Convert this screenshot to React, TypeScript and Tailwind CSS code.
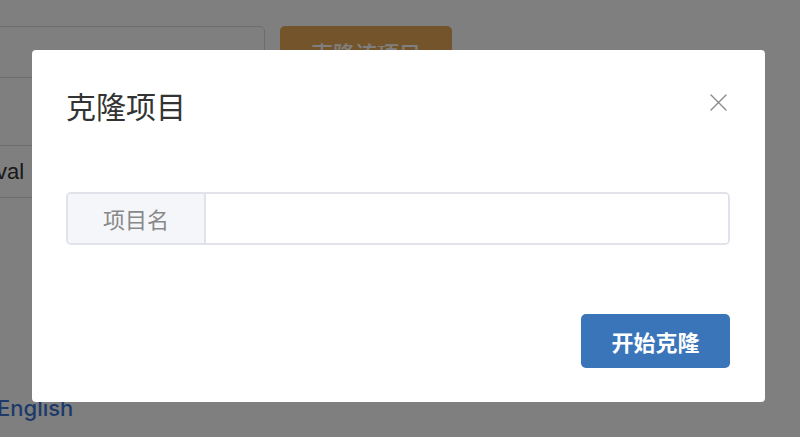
import React from "react";

export default function App() {
  const cjk = { fontFamily: '"Noto Sans CJK SC", "Noto Sans", sans-serif' };
  return (
    <div className="relative h-[437px] w-[800px] overflow-hidden bg-white" style={{ fontFamily: '"Liberation Sans", "Noto Sans CJK SC", sans-serif' }}>
      {/* background page */}
      <div className="flex flex-col pt-[26px]">
        <div className="flex items-start">
          <div className="-ml-[40px] h-[52px] w-[305px] rounded-[5px] border border-[#d6d8de] bg-white" />
          <div className="ml-[15px] flex h-[52px] w-[172px] items-center justify-center rounded-[5px] bg-[#e8aa56] text-[22px] font-medium text-white" style={cjk}>
            克隆该项目
          </div>
        </div>
        <div className="mt-[67px] -ml-[100px] flex h-[53px] w-[400px] items-center rounded-[5px] border border-[#d6d8de] bg-white pl-[51px] text-[22px] text-[#333]">
          Interval
        </div>
        <div className="mt-[198px] -ml-[3px] text-[22px] font-medium leading-[24px] text-[#3c74d4]" style={{ fontFamily: '"Inter", "Liberation Sans", sans-serif' }}>English</div>
      </div>

      {/* overlay */}
      <div className="absolute inset-0 bg-black/50" />

      {/* modal */}
      <div className="absolute inset-0 flex justify-start pl-[32px] pt-[50px]">
        <div className="flex h-[352px] w-[733px] flex-col rounded-[4px] bg-white" style={cjk}>
          <div className="flex items-center justify-between pl-[34px] pr-[38px] pt-[35px]">
            <div className="text-[30px] leading-[40px] text-[#333]">克隆项目</div>
            <svg width="17" height="17" viewBox="0 0 17 17" className="mt-[-6px]">
              <path d="M1 1 L16 16 M16 1 L1 16" stroke="#8a8a8a" strokeWidth="1.4" strokeLinecap="round" />
            </svg>
          </div>
          <div className="mt-[67px] flex h-[53px] pl-[34px] pr-[35px]">
            <div className="flex h-full w-full overflow-hidden rounded-[5px] border-2 border-[#e2e3ea]">
              <div className="flex w-[138px] items-center justify-center border-r-2 border-[#e2e3ea] bg-[#f5f6fa] text-[22px] text-[#888]">
                项目名
              </div>
              <div className="flex-1 bg-white" />
            </div>
          </div>
          <div className="mt-[69px] flex justify-end pr-[35px]">
            <div className="flex h-[54px] w-[149px] items-center justify-center rounded-[5px] bg-[#3a75ba] text-[22px] font-bold text-white">
              开始克隆
            </div>
          </div>
        </div>
      </div>
    </div>
  );
}
